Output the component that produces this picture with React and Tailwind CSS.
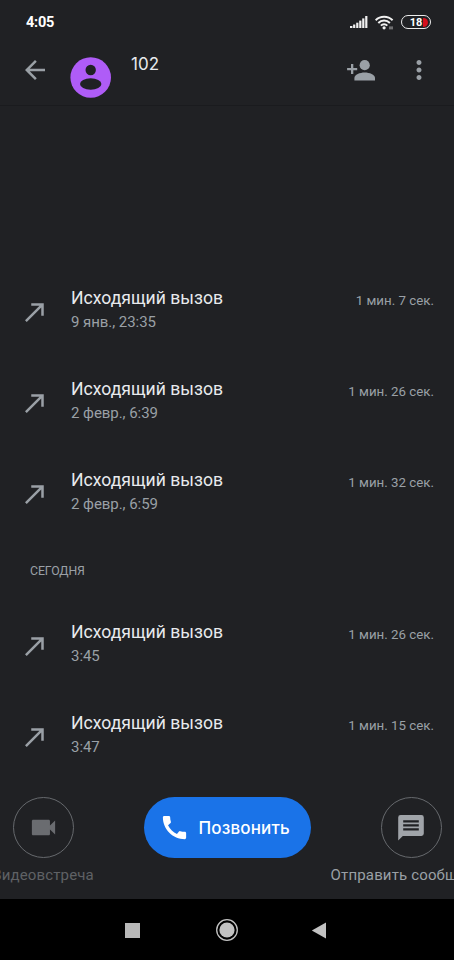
import { MdArrowBack, MdCallMade, MdCall, MdMoreVert, MdVideocam } from 'react-icons/md';

const earlierCalls = [
  { id: 1, date: '9 янв., 23:35', duration: '1 мин. 7 сек.' },
  { id: 2, date: '2 февр., 6:39', duration: '1 мин. 26 сек.' },
  { id: 3, date: '2 февр., 6:59', duration: '1 мин. 32 сек.' },
];

const todayCalls = [
  { id: 4, date: '3:45', duration: '1 мин. 26 сек.' },
  { id: 5, date: '3:47', duration: '1 мин. 15 сек.' },
];

function SignalIcon() {
  return (
    <svg width="18" height="13" viewBox="0 0 18 13" fill="#f1f1f1">
      <rect x="0" y="10" width="2.4" height="2" />
      <rect x="3.1" y="8.5" width="2.2" height="3.5" />
      <rect x="6.2" y="6.7" width="2.2" height="5.3" />
      <rect x="9.2" y="4.6" width="2.2" height="7.4" />
      <rect x="12.2" y="2.4" width="2.2" height="9.6" />
      <rect x="15.2" y="0" width="2.2" height="12" />
    </svg>
  );
}

function WifiIcon() {
  return (
    <svg width="19" height="15" viewBox="0 0 19 15" fill="none" stroke="#f1f1f1" strokeWidth="2">
      <path d="M.6 5.200a12 12 0 0 1 17 0" />
      <path d="M3.300 8a8.200 8.200 0 0 1 11.600 0" />
      <path d="M5.900 10.600a4.500 4.500 0 0 1 6.400 0" />
      <circle cx="9.100" cy="12.800" r="1.600" fill="#f1f1f1" stroke="none" />
      <path d="M15 14.400v-3M17 11.400v3" strokeWidth="1" stroke="#bdbdbd" />
    </svg>
  );
}

function Battery() {
  return (
    <div className="flex h-[14px] w-[30px] items-center justify-end rounded-full border-[1.5px] border-[#ececec] pr-[2px]">
      <span className="text-[11px] leading-none font-bold tracking-[-0.2px] text-white">18</span>
      <span className="ml-px h-[9px] w-[5px] rounded-r-full bg-[#d50f1c]"></span>
    </div>
  );
}

function Avatar() {
  return (
    <svg width="41" height="41" viewBox="0 0 41 41">
      <circle cx="20.7" cy="20.5" r="20.3" fill="#af5cf7" />
      <circle cx="20.7" cy="13" r="5.2" fill="#202124" />
      <ellipse cx="20.7" cy="27" rx="10.7" ry="5.8" fill="#202124" />
    </svg>
  );
}

function AddPersonIcon() {
  return (
    <svg width="29" height="21" viewBox="0 0 29 21" fill="#9aa0a6">
      <path d="M4 4h2.300v3.900h3.900v2.300H6.300v3.900H4v-3.900H.1V7.900H4z" />
      <circle cx="17.700" cy="5.200" r="5.100" />
      <path d="M7.400 20.400v-2.300c0-3.500 5.500-5.600 10.300-5.600S28 14.600 28 18.100v2.300z" />
    </svg>
  );
}

function MessageIcon() {
  return (
    <svg width="26" height="26" viewBox="0 0 26 26">
      <path d="M2.600 0h20.800a2.400 2.400 0 0 1 2.400 2.400v16.200a2.400 2.400 0 0 1-2.400 2.400H4.800L.2 25.400V2.400A2.400 2.400 0 0 1 2.600 0z" fill="#a0a4a9" />
      <path d="M5.200 6.300h15.600M5.200 10.300h15.600M5.200 14.400h15.600" stroke="#202124" strokeWidth="2.300" />
    </svg>
  );
}

function CallRow({ call }) {
  return (
    <div className="flex h-[91px] items-center pr-[20px] pb-px pl-5">
      <MdCallMade size={30} className="text-[#9aa0a6]" />
      <div className="mb-[5px] ml-[21px] flex-1">
        <div className="flex items-center justify-between">
          <span className="pt-px text-[17.6px] leading-[23px] text-[#e8eaed]">Исходящий вызов</span>
          <span className="pt-[5px] text-[13.3px] leading-[19px] text-[#9aa0a6]">{call.duration}</span>
        </div>
        <p className="text-[15px] leading-[24px] tracking-[-0.05px] text-[#9aa0a6]">{call.date}</p>
      </div>
    </div>
  );
}

export default function App() {
  return (
    <div className="flex h-[960px] w-[454px] flex-col overflow-hidden bg-[#202124] font-['Roboto',sans-serif]">
      <div className="flex h-[44px] items-center justify-between pr-[23px] pl-[26px]">
        <span className="pt-[2px] text-[14.5px] leading-none font-bold tracking-[-0.2px] text-white">4:05</span>
        <div className="flex items-center gap-[7px]">
          <SignalIcon />
          <WifiIcon />
          <Battery />
        </div>
      </div>

      <header className="flex h-[62px] items-start border-b border-[#1a1b1e] pl-5">
        <MdArrowBack size={30} className="mt-[11px] text-[#9aa0a6]" />
        <div className="mt-[13px] ml-[20px]">
          <Avatar />
        </div>
        <h1 className="mt-[8px] ml-[20px] flex-1 font-['Inter',sans-serif] text-[17px] leading-[24px] text-[#e8eaed]">102</h1>
        <div className="mt-[16px]">
          <AddPersonIcon />
        </div>
        <MdMoreVert size={30} className="mt-[11px] mr-[20px] ml-[28px] text-[#9aa0a6]" />
      </header>

      <main className="flex flex-1 flex-col justify-end">
        {earlierCalls.map((call) => (
          <CallRow key={call.id} call={call} />
        ))}
        <h2 className="flex h-[61px] items-center pt-px pl-[30px] text-[12.3px] tracking-[-0.1px] text-[#9aa0a6]">СЕГОДНЯ</h2>
        {todayCalls.map((call) => (
          <CallRow key={call.id} call={call} />
        ))}
      </main>

      <div className="flex h-[116px] items-start justify-between pt-[14px]">
        <div className="flex w-[86px] flex-col items-center">
          <div className="flex size-[61px] items-center justify-center rounded-full border border-[#66696d]">
            <MdVideocam size={31} className="text-[#6a6c70]" />
          </div>
          <span className="mt-[5px] text-[15px] leading-[24px] tracking-[0.15px] whitespace-nowrap text-[#5f6165]">Видеовстреча</span>
        </div>
        <button className="flex h-[61px] w-[167px] items-center rounded-full bg-[#1a73e8] pl-[15px] text-white">
          <MdCall size={31} />
          <span className="mt-[2px] ml-[9px] font-['Inter',sans-serif] text-[17px] font-medium tracking-[0.15px]">Позвонить</span>
        </button>
        <div className="flex w-[86px] flex-col items-center">
          <div className="flex size-[61px] items-center justify-center rounded-full border border-[#66696d]">
            <MessageIcon />
          </div>
          <span className="mt-[5px] text-[15px] leading-[24px] tracking-[0.15px] whitespace-nowrap text-[#9aa0a6]">Отправить сообщение</span>
        </div>
      </div>

      <nav className="flex h-[61px] items-center bg-black pt-px pl-[125px]">
        <div className="size-[15px] bg-[#b9b9b9]"></div>
        <svg width="24" height="24" viewBox="0 0 24 24" className="mr-[72px] ml-[75px]">
          <circle cx="12" cy="12" r="10.300" fill="none" stroke="#c2c2c2" strokeWidth="1.300" />
          <circle cx="12" cy="12" r="7.600" fill="#c2c2c2" />
        </svg>
        <svg width="15" height="17" viewBox="0 0 15 17" fill="#c2c2c2">
          <path d="M15 .5v16L.8 8.500z" />
        </svg>
      </nav>
    </div>
  );
}
